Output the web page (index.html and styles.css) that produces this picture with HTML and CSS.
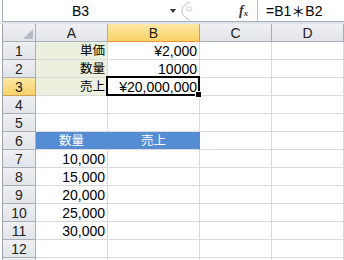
FILE: index.html
```html
<!DOCTYPE html>
<html lang="ja">
<head>
  <meta charset="UTF-8" />
  <title>Sheet</title>
  <link rel="stylesheet" href="styles.css">
</head>
<body>
  <div class="formula-bar">
    <div class="name-box">
      <span class="name">B3</span>
      <span class="drop"></span>
    </div>
    <div class="fx-area">
      <svg class="grip" width="12" height="20" viewBox="0 0 12 20">
        <path d="M9 1 C3 3 1 7 1 10 C1 13 3 17 9 19" fill="none" stroke="#b9c0c9" stroke-width="1"/>
        <ellipse cx="8" cy="8" rx="3" ry="2" fill="#f4f6f9" stroke="#c9ced6" stroke-width="0.8"/>
      </svg>
      <span class="fx">f<sub>x</sub></span>
    </div>
    <div class="formula">=B1＊B2</div>
  </div>
  <div class="band"></div>

  <div class="sheet">
    <div class="hd corner"><span class="tri"></span></div>
    <div class="hd col">A</div>
    <div class="hd col sel-col">B</div>
    <div class="hd col">C</div>
    <div class="hd col">D</div>

    <div class="hd row">1</div>
    <div class="c green right ja">単価</div>
    <div class="c right">¥2,000</div>
    <div class="c"></div>
    <div class="c"></div>

    <div class="hd row">2</div>
    <div class="c green right ja">数量</div>
    <div class="c right">10000</div>
    <div class="c"></div>
    <div class="c"></div>

    <div class="hd row sel-row">3</div>
    <div class="c green right ja">売上</div>
    <div class="c right active">¥20,000,000<span class="handle"></span></div>
    <div class="c"></div>
    <div class="c"></div>

    <div class="hd row">4</div>
    <div class="c"></div><div class="c"></div><div class="c"></div><div class="c"></div>

    <div class="hd row">5</div>
    <div class="c"></div><div class="c"></div><div class="c"></div><div class="c"></div>

    <div class="hd row">6</div>
    <div class="c blue ja">数量</div>
    <div class="c blue ja">売上</div>
    <div class="c"></div>
    <div class="c"></div>

    <div class="hd row">7</div>
    <div class="c right">10,000</div><div class="c"></div><div class="c"></div><div class="c"></div>

    <div class="hd row">8</div>
    <div class="c right">15,000</div><div class="c"></div><div class="c"></div><div class="c"></div>

    <div class="hd row">9</div>
    <div class="c right">20,000</div><div class="c"></div><div class="c"></div><div class="c"></div>

    <div class="hd row">10</div>
    <div class="c right">25,000</div><div class="c"></div><div class="c"></div><div class="c"></div>

    <div class="hd row">11</div>
    <div class="c right">30,000</div><div class="c"></div><div class="c"></div><div class="c"></div>

    <div class="hd row">12</div>
    <div class="c"></div><div class="c"></div><div class="c"></div><div class="c"></div>

    <div class="hd row"></div>
    <div class="c"></div><div class="c"></div><div class="c"></div><div class="c"></div>
  </div>
</body>
</html>
```

FILE: styles.css
```css
body {
  margin: 0;
  width: 344px;
  height: 260px;
  overflow: hidden;
  background: #fff;
  font-family: "Liberation Sans", "Noto Sans CJK JP", sans-serif;
  font-size: 14px;
  color: #000;
}
.formula-bar {
  display: flex;
  height: 22px;
  margin-left: 2px;
  border-left: 1px solid #a5acb5;
  border-bottom: 1px solid #a5acb5;
  box-sizing: border-box;
  background: #fff;
}
.name-box {
  width: 177px;
  display: flex;
  align-items: center;
  position: relative;
}
.name {
  width: 155px;
  text-align: center;
  padding-top: 1px;
}
.drop {
  width: 0;
  height: 0;
  margin-left: 12px;
  border-left: 3px solid transparent;
  border-right: 3px solid transparent;
  border-top: 4px solid #333;
}
.fx-area {
  width: 77px;
  display: flex;
  align-items: center;
  border-right: 1px solid #b9c0c9;
}
.grip {
  margin-left: 1px;
}
.fx {
  margin-left: 46px;
  font-family: "Liberation Serif", serif;
  font-style: italic;
  font-weight: bold;
  font-size: 14px;
  color: #333;
}
.fx sub {
  font-size: 9px;
  vertical-align: -1px;
}
.formula {
  flex: 1;
  padding-left: 8px;
  line-height: 22px;
}
.band {
  height: 2px;
  background: #dfe4ea;
}
.sheet {
  display: grid;
  grid-template-columns: 33px 72px 92px 72px 72px;
  grid-template-rows: 18px;
  grid-auto-rows: 18px;
  margin-left: 2px;
  border-left: 1px solid #9ea4ab;
}
.sheet > div {
  box-sizing: border-box;
  border-right: 1px solid #dadada;
  border-bottom: 1px solid #dadada;
  line-height: 17px;
  padding-top: 1px;
  white-space: nowrap;
}
.sheet > .hd {
  background: linear-gradient(#eef0f3, #e1e4e8);
  border-right-color: #a9afb6;
  border-bottom-color: #a9afb6;
  text-align: center;
  color: #222;
}
.corner {
  position: relative;
}
.tri {
  position: absolute;
  right: 2px;
  bottom: 2px;
  width: 0;
  height: 0;
  border-left: 10px solid transparent;
  border-bottom: 10px solid #b6bcc4;
}
.sheet > .sel-col {
  background: linear-gradient(#fde8a6, #f9d166);
  border-bottom: 1px solid #f29436;
  border-right-color: #c9a060;
}
.sheet > .sel-row {
  background: linear-gradient(#fde8a6, #f9d166);
  border-right: 1px solid #f29436;
  border-bottom-color: #c9a060;
}
.right {
  text-align: right;
  padding-right: 2px;
}
.ja {
  font-size: 12.5px;
}
.sheet > .green {
  background: #ebf1de;
}
.sheet > .blue {
  background: #548dd4;
  border-right-color: #548dd4;
  color: #fff;
  text-align: center;
}
.sheet > .active {
  position: relative;
  overflow: visible;
}
.active::before {
  content: "";
  position: absolute;
  left: -2px;
  top: -2px;
  right: -1px;
  bottom: -1px;
  border: 2px solid #000;
}
.handle {
  position: absolute;
  right: -3px;
  bottom: -3px;
  width: 5px;
  height: 5px;
  background: #000;
  border: 1px solid #fff;
  z-index: 2;
}
```
